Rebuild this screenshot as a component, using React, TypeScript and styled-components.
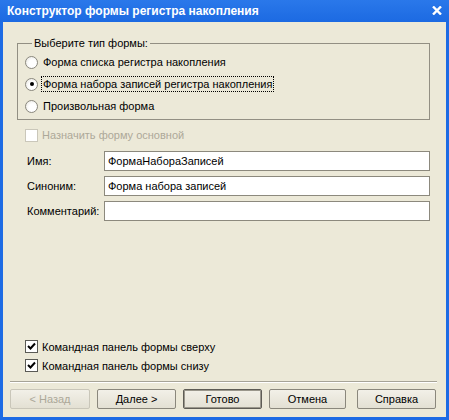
import React from "react";
import styled, { createGlobalStyle } from "styled-components";

const GlobalStyle = createGlobalStyle`
  html, body {
    margin: 0;
    padding: 0;
    background: #ffffff;
  }
  body {
    font-family: "Liberation Sans", Arial, sans-serif;
    font-size: 11px;
    color: #000000;
  }
`;

const Window = styled.div`
  width: 449px;
  height: 420px;
  box-sizing: border-box;
  background: #1d6be4;
  padding: 0 3px 3px 3px;
  display: flex;
  flex-direction: column;
`;

const TitleBar = styled.div`
  height: 21px;
  display: flex;
  align-items: center;
  justify-content: space-between;
  color: #ffffff;
  font-weight: bold;
  font-size: 12px;
  background: linear-gradient(#2a78ea, #1c6ae2);
  margin: 0 -3px;
  padding: 0 7px 1px 7px;
`;

const CloseIcon = () => (
  <svg width="10" height="9" viewBox="0 0 10 9">
    <path d="M1 0.5 L9 8.5 M9 0.5 L1 8.5" stroke="#ffffff" strokeWidth="2.4" />
  </svg>
);

const Client = styled.div`
  flex: 1;
  background: #ece9d8;
  display: flex;
  flex-direction: column;
  padding: 14px 9px 8px 7px;
  box-sizing: border-box;
`;

const GroupBox = styled.fieldset`
  margin: 0 7px 0 7px;
  padding: 1px 0 2px 7px;
  border: 1px solid #928f83;
  min-width: 0;
`;

const Legend = styled.legend`
  padding: 0 2px;
  margin-left: 7px;
  line-height: 14px;
`;

const OptionRow = styled.label`
  height: 22px;
  display: flex;
  align-items: center;
  gap: 4px;
`;

const Radio = styled.span<{ $checked?: boolean }>`
  width: 11px;
  height: 11px;
  border-radius: 50%;
  border: 1px solid #8a887e;
  background: radial-gradient(circle at 60% 60%, #ffffff 40%, #e4e2da 100%);
  display: flex;
  align-items: center;
  justify-content: center;
  flex-shrink: 0;
  &::after {
    content: "";
    width: 4px;
    height: 4px;
    border-radius: 50%;
    background: #000000;
    display: ${(p) => (p.$checked ? "block" : "none")};
  }
`;

const OptionText = styled.span<{ $focused?: boolean }>`
  padding: 0 1px;
  line-height: 14px;
  outline: ${(p) => (p.$focused ? "1px dotted #000000" : "none")};
  outline-offset: 0px;
`;

const CheckRow = styled.label<{ $disabled?: boolean; $height: number }>`
  height: ${(p) => p.$height}px;
  display: flex;
  align-items: center;
  gap: 4px;
  padding-left: 15px;
  color: ${(p) => (p.$disabled ? "#aca899" : "#000000")};
`;

const CheckBox = styled.span<{ $disabled?: boolean }>`
  width: 11px;
  height: 11px;
  border: 1px solid ${(p) => (p.$disabled ? "#cac7ba" : "#5a5a55")};
  background: #ffffff;
  display: flex;
  align-items: center;
  justify-content: center;
  flex-shrink: 0;
`;

const CheckMark = () => (
  <svg width="9" height="9" viewBox="0 0 9 9">
    <path d="M1 4 L3.5 6.5 L8 1.5" stroke="#000000" strokeWidth="2" fill="none" />
  </svg>
);

const DisabledCheck = styled(CheckRow)`
  margin-top: 5px;
  margin-bottom: 6px;
`;

const FieldList = styled.div`
  display: flex;
  flex-direction: column;
  gap: 5px;
  padding-left: 17px;
  padding-right: 7px;
`;

const FieldRow = styled.div`
  display: grid;
  grid-template-columns: 77px 1fr;
  align-items: center;
  height: 20px;
`;

const FieldLabel = styled.span`
  white-space: nowrap;
`;

const TextInput = styled.div`
  height: 20px;
  box-sizing: border-box;
  border: 1px solid #8c897d;
  background: #ffffff;
  padding: 0 3px;
  display: flex;
  align-items: center;
`;

const Spacer = styled.div`
  flex: 1;
`;

const Separator = styled.div`
  margin: 6px 0 6px 0;
  border-top: 1px solid #a6a397;
  border-bottom: 1px solid #ffffff;
`;

const ButtonBar = styled.div`
  display: flex;
  gap: 7px;
`;

const Button = styled.button<{ $default?: boolean; $width: number; $gapBefore?: number }>`
  width: ${(p) => p.$width}px;
  height: 20px;
  margin-left: ${(p) => p.$gapBefore ?? 0}px;
  font-family: "Liberation Sans", Arial, sans-serif;
  font-size: 11px;
  color: ${(p) => (p.disabled ? "#aca899" : "#000000")};
  background: linear-gradient(#f2f0e8, #e3e0d3);
  border: 1px solid ${(p) => (p.disabled ? "#c9c6b9" : p.$default ? "#5e5c55" : "#8a877c")};
  box-shadow: ${(p) => (p.$default ? "inset 0 0 0 1px #9a978c" : "none")};
  border-radius: 2px;
  padding: 0;
  display: flex;
  align-items: center;
  justify-content: center;
`;

export default function App() {
  return (
    <>
      <GlobalStyle />
      <Window>
        <TitleBar>
          <span>Конструктор формы регистра накопления</span>
          <CloseIcon />
        </TitleBar>
        <Client>
          <GroupBox>
            <Legend>Выберите тип формы:</Legend>
            <OptionRow>
              <Radio />
              <OptionText>Форма списка регистра накопления</OptionText>
            </OptionRow>
            <OptionRow>
              <Radio $checked />
              <OptionText $focused>Форма набора записей регистра накопления</OptionText>
            </OptionRow>
            <OptionRow>
              <Radio />
              <OptionText>Произвольная форма</OptionText>
            </OptionRow>
          </GroupBox>

          <DisabledCheck $disabled $height={20}>
            <CheckBox $disabled />
            <span>Назначить форму основной</span>
          </DisabledCheck>

          <FieldList>
            <FieldRow>
              <FieldLabel>Имя:</FieldLabel>
              <TextInput>ФормаНабораЗаписей</TextInput>
            </FieldRow>
            <FieldRow>
              <FieldLabel>Синоним:</FieldLabel>
              <TextInput>Форма набора записей</TextInput>
            </FieldRow>
            <FieldRow>
              <FieldLabel>Комментарий:</FieldLabel>
              <TextInput />
            </FieldRow>
          </FieldList>

          <Spacer />

          <CheckRow $height={19}>
            <CheckBox>
              <CheckMark />
            </CheckBox>
            <span>Командная панель формы сверху</span>
          </CheckRow>
          <CheckRow $height={19}>
            <CheckBox>
              <CheckMark />
            </CheckBox>
            <span>Командная панель формы снизу</span>
          </CheckRow>

          <Separator />

          <ButtonBar>
            <Button disabled $width={80}>&lt; Назад</Button>
            <Button $width={79}>Далее &gt;</Button>
            <Button $default $width={79}>Готово</Button>
            <Button $width={77}>Отмена</Button>
            <Button $width={79} $gapBefore={4}>Справка</Button>
          </ButtonBar>
        </Client>
      </Window>
    </>
  );
}
